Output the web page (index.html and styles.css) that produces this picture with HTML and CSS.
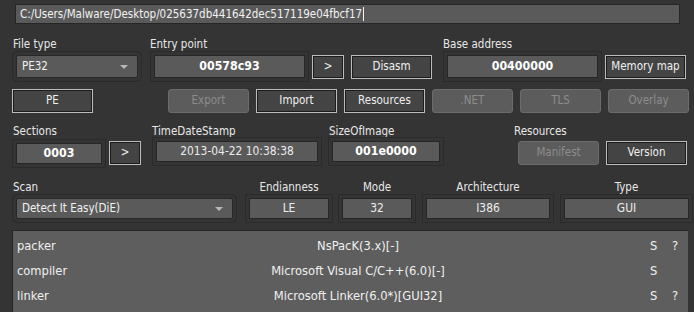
FILE: index.html
```html
<!DOCTYPE html>
<html lang="en">
<head>
    <meta charset="UTF-8">
    <title>Detect It Easy</title>
    <link rel="stylesheet" href="styles.css">
</head>
<body>
    <!-- File path -->
    <div class="path">C:/Users/Malware/Desktop/025637db441642dec517119e04fbcf17<span class="caret"></span></div>

    <!-- File type / entry point / base address -->
    <div class="row row-head">
        <div class="group g-filetype">
            <div class="label">File type</div>
            <div class="widgets">
                <div class="combo w-filetype">PE32<span class="arrow"></span></div>
            </div>
        </div>
        <div class="group g-entry">
            <div class="label">Entry point</div>
            <div class="widgets">
                <div class="field bold w-entry">00578c93</div>
                <div class="btn w-small">&gt;</div>
                <div class="btn w-btn">Disasm</div>
            </div>
        </div>
        <div class="group g-base">
            <div class="label">Base address</div>
            <div class="widgets">
                <div class="field bold w-base">00400000</div>
                <div class="btn w-btn">Memory map</div>
            </div>
        </div>
    </div>

    <!-- Viewers -->
    <div class="row row-buttons">
        <div class="btn w-pe">PE</div>
        <div class="btn off w-export">Export</div>
        <div class="btn w-btn">Import</div>
        <div class="btn w-btn">Resources</div>
        <div class="btn off w-btn">.NET</div>
        <div class="btn off w-btn">TLS</div>
        <div class="btn off w-btn">Overlay</div>
    </div>

    <!-- Sections / timestamp / image size / resources -->
    <div class="row row-sections">
        <div class="group g-sections">
            <div class="label">Sections</div>
            <div class="widgets">
                <div class="field bold w-sections">0003</div>
                <div class="btn w-small">&gt;</div>
            </div>
        </div>
        <div class="group g-time">
            <div class="label">TimeDateStamp</div>
            <div class="widgets">
                <div class="field w-time">2013-04-22 10:38:38</div>
            </div>
        </div>
        <div class="group g-size">
            <div class="label">SizeOfImage</div>
            <div class="widgets">
                <div class="field bold w-size">001e0000</div>
            </div>
        </div>
        <div class="group g-res">
            <div class="label">Resources</div>
            <div class="widgets">
                <div class="btn off w-btn">Manifest</div>
                <div class="btn w-btn">Version</div>
            </div>
        </div>
    </div>

    <!-- Scan engine and binary info -->
    <div class="row row-scan">
        <div class="group g-scan">
            <div class="label">Scan</div>
            <div class="widgets">
                <div class="combo w-scan">Detect It Easy(DiE)<span class="arrow"></span></div>
            </div>
        </div>
        <div class="group center g-endian">
            <div class="label">Endianness</div>
            <div class="field">LE</div>
        </div>
        <div class="group center g-mode">
            <div class="label">Mode</div>
            <div class="field">32</div>
        </div>
        <div class="group center g-arch">
            <div class="label">Architecture</div>
            <div class="field">I386</div>
        </div>
        <div class="group center g-type">
            <div class="label">Type</div>
            <div class="field">GUI</div>
        </div>
    </div>

    <!-- Scan results -->
    <div class="results">
        <div class="result">
            <span class="name">packer</span>
            <span class="value">NsPacK(3.x)[-]</span>
            <span></span>
            <span class="flag">S</span>
            <span class="flag">?</span>
        </div>
        <div class="result">
            <span class="name">compiler</span>
            <span class="value">Microsoft Visual C/C++(6.0)[-]</span>
            <span></span>
            <span class="flag">S</span>
            <span class="flag"></span>
        </div>
        <div class="result">
            <span class="name">linker</span>
            <span class="value">Microsoft Linker(6.0*)[GUI32]</span>
            <span></span>
            <span class="flag">S</span>
            <span class="flag">?</span>
        </div>
    </div>
</body>
</html>
```

FILE: styles.css
```css
body {
    margin: 0;
    width: 694px;
    height: 312px;
    overflow: hidden;
    background-color: #343434;
    color: #e4e4e4;
    font-family: "DejaVu Sans Condensed", "DejaVu Sans", sans-serif;
    font-stretch: semi-condensed;
    font-size: 11.5px;
}
.path {
    margin: 4px 0 0 15px;
    width: 665px;
    height: 20px;
    box-sizing: border-box;
    padding-left: 4px;
    line-height: 18px;
    background-color: #5a5a5a;
    border: 1px solid #262626;
    color: #f2f2f2;
}
.caret {
    display: inline-block;
    width: 1px;
    height: 14px;
    margin-left: 1px;
    vertical-align: -3px;
    background-color: #f2f2f2;
}
.row {
    display: flex;
}
.group {
    display: flex;
    flex-direction: column;
}
.label {
    height: 16px;
    line-height: 16px;
    color: #e8e8e8;
}
.widgets {
    display: flex;
    align-items: center;
}

/* shared widget looks */
.field,
.combo,
.btn {
    box-sizing: border-box;
    white-space: nowrap;
}
.field {
    height: 21px;
    line-height: 19px;
    text-align: center;
    font-size: 11.9px;
    background-color: #5a5a5a;
    border: 1px solid #262626;
    color: #ececec;
    box-shadow: 0 0 0 3px #343434, 0 0 0 4px #2b2b2b;
}
.field.bold {
    font-weight: bold;
    font-size: 12.3px;
    color: #ffffff;
}
.combo {
    position: relative;
    height: 23px;
    line-height: 21px;
    padding-left: 5px;
    background-color: #5a5a5a;
    border: 1px solid #282828;
    border-radius: 2px;
    color: #f2f2f2;
    box-shadow: 0 0 0 3px #343434, 0 0 0 4px #2b2b2b;
}
.arrow {
    position: absolute;
    right: 9px;
    top: 9px;
    border-left: 4px solid transparent;
    border-right: 4px solid transparent;
    border-top: 4px solid #b8b8b8;
}
.btn {
    height: 24px;
    line-height: 20px;
    text-align: center;
    background-color: #444444;
    border: 1px solid #bcbcbc;
    box-shadow: inset 0 0 0 1px #1c1c1c;
    color: #f0f0f0;
}
.btn.off {
    background-color: #5c5c5c;
    border-color: #6c6c6c;
    border-radius: 3px;
    box-shadow: none;
    color: #8c8c8c;
}
.center {
    align-items: center;
}

/* row 1 */
.row-head {
    margin-top: 12px;
}
.row-head .widgets {
    margin-top: 2px;
    height: 25px;
}
.row-head .field {
    height: 23px;
    line-height: 21px;
}
.g-filetype {
    margin-left: 13px;
    width: 137px;
}
.w-filetype {
    margin-left: 3px;
    width: 122px;
}
.g-entry {
    width: 293px;
}
.w-entry {
    margin-left: 4px;
    width: 151px;
}
.w-small {
    margin-left: 7px;
    width: 32px;
}
.w-btn {
    margin-left: 7px;
    width: 81px;
}
.g-base {
    width: 250px;
}
.w-base {
    margin-left: 4px;
    width: 151px;
}

/* row 2 */
.row-buttons {
    margin-top: 10px;
    padding-left: 12px;
}
.w-pe {
    width: 81px;
}
.w-export {
    margin-left: 75px;
    width: 81px;
}

/* row 3 */
.row-sections {
    margin-top: 10px;
}
.row-sections .widgets {
    margin-top: 2px;
}
.g-sections {
    margin-left: 13px;
    width: 139px;
}
.w-sections {
    margin-left: 3px;
    width: 86px;
}
.g-time {
    width: 177px;
}
.w-time {
    margin-left: 4px;
    width: 162px;
}
.g-size {
    width: 185px;
}
.w-size {
    margin-left: 3px;
    width: 108px;
}
.g-res .widgets .w-btn:first-child {
    margin-left: 4px;
}

/* row 4 */
.row-scan {
    margin-top: 14px;
}
.row-scan .widgets,
.row-scan .field {
    margin-top: 3px;
}
.g-scan {
    margin-left: 13px;
    width: 236px;
}
.w-scan {
    margin-left: 3px;
    width: 217px;
    height: 21px;
    line-height: 19px;
}
.w-scan .arrow {
    top: 8px;
}
.g-endian {
    width: 80px;
}
.g-endian .field {
    width: 80px;
}
.g-mode {
    margin-left: 13px;
    width: 70px;
}
.g-mode .field {
    width: 70px;
}
.g-arch {
    margin-left: 14px;
    width: 124px;
}
.g-arch .field {
    width: 124px;
}
.g-type {
    margin-left: 14px;
    width: 125px;
}
.g-type .field {
    width: 125px;
}

/* results */
.results {
    margin: 11px 0 0 12px;
    width: 676px;
    height: 90px;
    box-sizing: border-box;
    padding-top: 2px;
    font-size: 12.8px;
    background-color: #5e5e5e;
    border-top: 1px solid #262626;
    border-left: 1px solid #262626;
    color: #f0f0f0;
}
.result {
    display: grid;
    grid-template-columns: 87px 516px 34px 22px 16px;
    height: 25px;
    line-height: 25px;
}
.name {
    padding-left: 4px;
}
.value {
    text-align: center;
}
```
